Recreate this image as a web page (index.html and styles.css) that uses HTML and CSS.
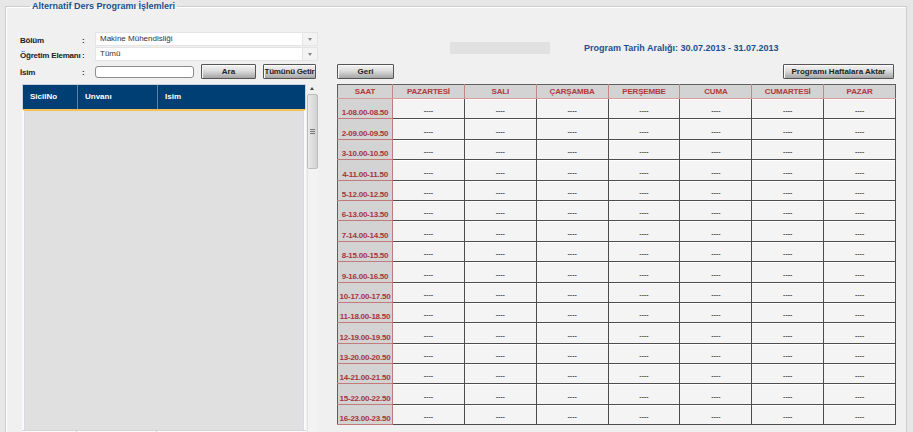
FILE: index.html
```html
<!DOCTYPE html>
<html lang="tr">
<head>
<meta charset="utf-8">
<title>Alternatif Ders Programı İşlemleri</title>
<link rel="stylesheet" href="styles.css">
</head>
<body>
<fieldset class="panel">
  <legend class="panel-title">Alternatif Ders Programı İşlemleri</legend>
  <div class="content">
    <div class="left">
      <div class="form-row">
        <span class="lbl">Bölüm</span><span class="colon">:</span>
        <div class="select"><span class="select-text">Makine Mühendisliği</span><span class="select-arrow"></span></div>
      </div>
      <div class="form-row row2">
        <span class="lbl">Öğretim Elemanı</span><span class="colon">:</span>
        <div class="select"><span class="select-text">Tümü</span><span class="select-arrow"></span></div>
      </div>
      <div class="form-row row-search">
        <span class="lbl">İsim</span><span class="colon">:</span>
        <input class="text-input" type="text">
        <button class="btn btn-ara">Ara</button>
        <button class="btn btn-all">Tümünü Getir</button>
      </div>
      <div class="grid-wrap">
        <div class="grid">
          <div class="grid-head">
            <div class="gh c1">SicilNo</div>
            <div class="gh c2">Unvanı</div>
            <div class="gh c3">Isim</div>
          </div>
          <div class="grid-body"></div>
          <div class="grid-foot"><div class="gf c1"></div><div class="gf c2"></div><div class="gf c3"></div></div>
        </div>
        <div class="scrollbar">
          <div class="sb-up"></div>
          <div class="sb-thumb"><span class="grip"></span></div>
          <div class="sb-track"></div>
        </div>
      </div>
    </div>

    <div class="right">
      <div class="range-row">
        <div class="range-bar"></div>
        <span class="range-text">Program Tarih Aralığı: 30.07.2013 - 31.07.2013</span>
      </div>
      <div class="action-row">
        <button class="btn btn-back">Geri</button>
        <button class="btn btn-transfer">Programı Haftalara Aktar</button>
      </div>
      <table class="schedule">
        <colgroup>
          <col class="w-time"><col class="w-day"><col class="w-day"><col class="w-day"><col class="w-day"><col class="w-day"><col class="w-day"><col class="w-day">
        </colgroup>
        <thead>
          <tr><th>SAAT</th><th>PAZARTESİ</th><th>SALI</th><th>ÇARŞAMBA</th><th>PERŞEMBE</th><th>CUMA</th><th>CUMARTESİ</th><th>PAZAR</th></tr>
        </thead>
        <tbody>
          <tr><td class="time">1-08.00-08.50</td><td class="day">----</td><td class="day">----</td><td class="day">----</td><td class="day">----</td><td class="day">----</td><td class="day">----</td><td class="day">----</td></tr>
          <tr><td class="time">2-09.00-09.50</td><td class="day">----</td><td class="day">----</td><td class="day">----</td><td class="day">----</td><td class="day">----</td><td class="day">----</td><td class="day">----</td></tr>
          <tr><td class="time">3-10.00-10.50</td><td class="day">----</td><td class="day">----</td><td class="day">----</td><td class="day">----</td><td class="day">----</td><td class="day">----</td><td class="day">----</td></tr>
          <tr><td class="time">4-11.00-11.50</td><td class="day">----</td><td class="day">----</td><td class="day">----</td><td class="day">----</td><td class="day">----</td><td class="day">----</td><td class="day">----</td></tr>
          <tr><td class="time">5-12.00-12.50</td><td class="day">----</td><td class="day">----</td><td class="day">----</td><td class="day">----</td><td class="day">----</td><td class="day">----</td><td class="day">----</td></tr>
          <tr><td class="time">6-13.00-13.50</td><td class="day">----</td><td class="day">----</td><td class="day">----</td><td class="day">----</td><td class="day">----</td><td class="day">----</td><td class="day">----</td></tr>
          <tr><td class="time">7-14.00-14.50</td><td class="day">----</td><td class="day">----</td><td class="day">----</td><td class="day">----</td><td class="day">----</td><td class="day">----</td><td class="day">----</td></tr>
          <tr><td class="time">8-15.00-15.50</td><td class="day">----</td><td class="day">----</td><td class="day">----</td><td class="day">----</td><td class="day">----</td><td class="day">----</td><td class="day">----</td></tr>
          <tr><td class="time">9-16.00-16.50</td><td class="day">----</td><td class="day">----</td><td class="day">----</td><td class="day">----</td><td class="day">----</td><td class="day">----</td><td class="day">----</td></tr>
          <tr><td class="time">10-17.00-17.50</td><td class="day">----</td><td class="day">----</td><td class="day">----</td><td class="day">----</td><td class="day">----</td><td class="day">----</td><td class="day">----</td></tr>
          <tr><td class="time">11-18.00-18.50</td><td class="day">----</td><td class="day">----</td><td class="day">----</td><td class="day">----</td><td class="day">----</td><td class="day">----</td><td class="day">----</td></tr>
          <tr><td class="time">12-19.00-19.50</td><td class="day">----</td><td class="day">----</td><td class="day">----</td><td class="day">----</td><td class="day">----</td><td class="day">----</td><td class="day">----</td></tr>
          <tr><td class="time">13-20.00-20.50</td><td class="day">----</td><td class="day">----</td><td class="day">----</td><td class="day">----</td><td class="day">----</td><td class="day">----</td><td class="day">----</td></tr>
          <tr><td class="time">14-21.00-21.50</td><td class="day">----</td><td class="day">----</td><td class="day">----</td><td class="day">----</td><td class="day">----</td><td class="day">----</td><td class="day">----</td></tr>
          <tr><td class="time">15-22.00-22.50</td><td class="day">----</td><td class="day">----</td><td class="day">----</td><td class="day">----</td><td class="day">----</td><td class="day">----</td><td class="day">----</td></tr>
          <tr><td class="time">16-23.00-23.50</td><td class="day">----</td><td class="day">----</td><td class="day">----</td><td class="day">----</td><td class="day">----</td><td class="day">----</td><td class="day">----</td></tr>
        </tbody>
      </table>
    </div>
  </div>
</fieldset>
</body>
</html>
```

FILE: styles.css
```css
* { box-sizing: border-box; }

html, body {
  margin: 0;
  height: 432px;
  overflow: hidden;
}

body {
  background: #e7e7e7;
  font-family: "Liberation Sans", Arial, sans-serif;
  color: #222;
}

.panel {
  margin: 0 6px 0 5px;
  padding: 0 11px 0 14px;
  min-width: 0;
  height: 432px;
  background: #f0f0f0;
  border: 1px solid #cdcdcd;
  border-bottom: 0;
  box-shadow: inset 1px 1px 0 #ffffff;
}

.panel-title {
  margin-left: 10px;
  padding: 0 2px;
  font-size: 9px;
  line-height: 12px;
  font-weight: bold;
  color: #1d4f8c;
}

.content {
  display: grid;
  grid-template-columns: 298px 558px;
  column-gap: 19px;
  padding-top: 20px;
}

/* ---------- left ---------- */
.form-row {
  display: flex;
  align-items: center;
  height: 14px;
}

.row2 { margin-top: 1px; }

.row-search {
  margin-top: 3px;
  height: 15px;
}

.lbl {
  width: 62px;
  font-size: 8px;
  font-weight: bold;
  letter-spacing: -0.2px;
  color: #222;
  white-space: nowrap;
  padding-top: 2px;
}

.colon {
  width: 13px;
  font-size: 8px;
  font-weight: bold;
  padding-top: 2px;
}

.select {
  display: flex;
  width: 223px;
  height: 14px;
  background: #ffffff;
  border: 1px solid #e4e4e4;
}

.select-text {
  flex: 1;
  padding-left: 4px;
  font-size: 8px;
  line-height: 12px;
  color: #333;
}

.select-arrow {
  position: relative;
  width: 15px;
  background: #f3f3f3;
  border-left: 1px solid #e6e6e6;
}

.select-arrow::after {
  content: "";
  position: absolute;
  left: 5px;
  top: 5px;
  border-left: 2px solid transparent;
  border-right: 2px solid transparent;
  border-top: 3px solid #888;
}

.text-input {
  width: 99px;
  height: 12px;
  margin: 0;
  padding: 0;
  border: 1px solid #8c8c8c;
  border-radius: 3px;
  background: #fff;
}

.btn {
  height: 15px;
  margin: 0;
  padding: 0;
  border: 1px solid #555;
  border-radius: 1px;
  background: linear-gradient(to bottom, #f4f4f4 0%, #dcdcdc 45%, #b9b9b9 80%, #a6a6a6 100%);
  box-shadow: inset 1px 1px 0 #fbfbfb;
  font-family: "Liberation Sans", Arial, sans-serif;
  font-size: 8px;
  font-weight: bold;
  color: #222;
  line-height: 13px;
  white-space: nowrap;
}

.btn-ara { width: 55px; margin-left: 7px; }
.btn-all { width: 53px; margin-left: 7px; letter-spacing: -0.2px; }

.grid-wrap {
  display: flex;
  margin-top: 5px;
  margin-left: 2px;
}

.grid {
  width: 284px;
}

.grid-head {
  display: flex;
  height: 25px;
  background: #003f73;
  border: 1px solid #c9d2dc;
  border-bottom: 0;
}

.gh {
  padding-left: 7px;
  font-size: 8px;
  font-weight: bold;
  line-height: 24px;
  color: #ffffff;
}

.c1 { width: 55px; }
.c2 { width: 80px; }
.c3 { flex: 1; }

.gh.c1, .gh.c2 { border-right: 1px solid #5d80a6; }

.grid-body {
  height: 321px;
  background: #e0e0e0;
  border-top: 2px solid #f6c257;
  border-left: 2px solid #fafafa;
  border-right: 2px solid #fafafa;
  box-shadow: inset 1px 0 0 #d6dbe6, inset -1px 0 0 #d6dbe6;
}

.grid-foot {
  display: flex;
  height: 2px;
  background: #fbfbfb;
  border-top: 1px solid #d5d5d5;
}

.gf.c1, .gf.c2 { border-right: 1px solid #cfcfcf; }

.scrollbar {
  display: flex;
  flex-direction: column;
  width: 11px;
  margin-left: 1px;
  height: 348px;
}

.sb-up {
  position: relative;
  height: 10px;
}

.sb-up::after {
  content: "";
  position: absolute;
  left: 3px;
  top: 3px;
  border-left: 2px solid transparent;
  border-right: 2px solid transparent;
  border-bottom: 3px solid #444;
}

.sb-thumb {
  display: flex;
  align-items: center;
  justify-content: center;
  height: 75px;
  background: linear-gradient(to right, #e9e9e9, #d2d2d2);
  border: 1px solid #bdbdbd;
  border-radius: 2px;
}

.grip {
  width: 5px;
  height: 5px;
  background: repeating-linear-gradient(to bottom, #777 0, #777 1px, transparent 1px, transparent 2px);
}

.sb-track {
  flex: 1;
  background: #f3f3f3;
  border-left: 1px solid #e2e2e2;
}

/* ---------- right ---------- */
.range-row {
  display: flex;
  align-items: center;
  height: 12px;
  margin-top: 10px;
  padding-left: 113px;
}

.range-bar {
  width: 100px;
  height: 12px;
  background: #e1e1e1;
}

.range-text {
  margin-left: 34px;
  font-size: 9px;
  font-weight: bold;
  color: #1d4f8c;
  white-space: nowrap;
}

.action-row {
  display: flex;
  justify-content: space-between;
  margin-top: 10px;
  padding-right: 1px;
}

.btn-back { width: 57px; }
.btn-transfer { width: 111px; }

.schedule {
  margin-top: 5px;
  width: 558px;
  table-layout: fixed;
  border-collapse: collapse;
  border: 1px solid #5e5e5e;
}

.w-time { width: 55px; }
.w-day { width: 71.86px; }

.schedule th {
  height: 14px;
  padding: 0;
  background: #d3d3d3;
  border: 1px solid #c58888;
  border-top: 1px solid #5e5e5e;
  border-bottom: 1px solid #d99c9c;
  font-size: 8px;
  font-weight: bold;
  letter-spacing: -0.2px;
  color: #b3383f;
  text-align: center;
  vertical-align: middle;
}

.schedule th:first-child { border-left: 1px solid #5e5e5e; }
.schedule th:last-child { border-right: 1px solid #5e5e5e; }

.schedule td {
  height: 20.4px;
  padding: 0;
  white-space: nowrap;
  vertical-align: bottom;
  text-align: center;
}

.schedule td.time {
  background: #d3d3d3;
  border: 1px solid #c27b7b;
  border-left: 1px solid #5e5e5e;
  padding-bottom: 1px;
  font-size: 8px;
  line-height: 9px;
  font-weight: bold;
  letter-spacing: -0.25px;
  color: #a8343d;
}

.schedule td.day {
  background: #f4f4f4;
  border: 1px solid #4d4d4d;
  box-shadow: inset 0 1px 0 #ffffff;
  padding-bottom: 4px;
  font-size: 7px;
  line-height: 7px;
  font-weight: bold;
  color: #555;
}
```
